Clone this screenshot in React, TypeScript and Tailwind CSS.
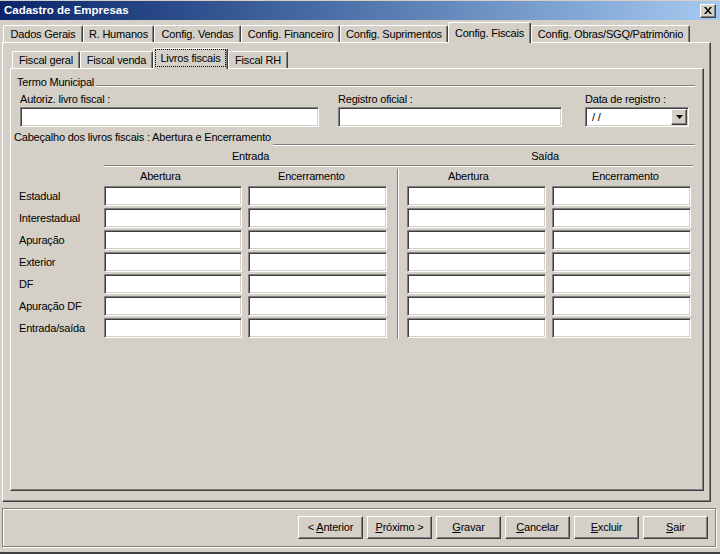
import React from "react";

const RAISED =
  "border border-t-white border-l-white border-r-[#404040] border-b-[#404040] shadow-[inset_-1px_-1px_0_#808080]";
const SUNKEN =
  "bg-white border border-t-[#808080] border-l-[#808080] border-r-white border-b-white shadow-[inset_1px_1px_0_#404040,inset_-1px_-1px_0_#d4d0c8]";
const ETCHED_H = "h-[2px] border-t border-t-[#808080] border-b border-b-white";

const TOP_TABS: [string, number][] = [
  ["Dados Gerais", 80],
  ["R. Humanos", 71],
  ["Config. Vendas", 87],
  ["Config. Financeiro", 99],
  ["Config. Suprimentos", 108],
  ["Config. Fiscais", 83],
  ["Config. Obras/SGQ/Patrimônio", 159],
];

const SUB_TABS: [string, number][] = [
  ["Fiscal geral", 68],
  ["Fiscal venda", 73],
  ["Livros fiscais", 75],
  ["Fiscal RH", 60],
];

const ROWS = [
  "Estadual",
  "Interestadual",
  "Apuração",
  "Exterior",
  "DF",
  "Apuração DF",
  "Entrada/saída",
];

function Tab({ label, width, active, focus }: { label: string; width: number; active?: boolean; focus?: boolean }) {
  const base =
    "flex shrink-0 items-stretch border-t border-l border-r border-t-white border-l-white border-r-[#404040] shadow-[inset_-1px_0_0_#808080] rounded-t-[2px]";
  return (
    <div
      className={
        active
          ? `${base} relative z-10 h-[21px] mb-[-1px] bg-[#d4d0c8]`
          : `${base} h-[17px]`
      }
      style={{ width }}
    >
      {focus ? (
        <div className="flex-1 ml-[1px] mr-[1px] mb-[2px] border border-dotted border-black flex items-center justify-center whitespace-nowrap">
          {label}
        </div>
      ) : (
        <div className="flex-1 flex items-center justify-center whitespace-nowrap">{label}</div>
      )}
    </div>
  );
}

function Field({ className = "" }: { className?: string }) {
  return <div className={`h-[20px] ${SUNKEN} ${className}`} />;
}

function Button({ pre = "", hot, rest }: { pre?: string; hot: string; rest: string }) {
  return (
    <div className={`w-[65px] h-[23px] bg-[#d4d0c8] ${RAISED} flex items-center justify-center`}>
      <span className="whitespace-pre">
        {pre}
        <span className="underline underline-offset-[1px]">{hot}</span>
        {rest}
      </span>
    </div>
  );
}

export default function App() {
  return (
    <div className="w-[720px] h-[554px] bg-[#d4d0c8] flex flex-col pt-[1px] border-b-2 border-b-[#404040] font-['Liberation_Sans',Arial,sans-serif] text-[11px] leading-[13px] tracking-[-0.2px] text-black">
      {/* title bar */}
      <div className="h-[19px] shrink-0 flex items-center justify-between pl-[4px] pr-[4px] bg-gradient-to-r from-[#0a246a] to-[#a6caf0]">
        <span className="text-white font-bold text-[11.5px] tracking-normal">Cadastro de Empresas</span>
        <div className={`w-[16px] h-[14px] bg-[#d4d0c8] ${RAISED} flex items-center justify-center`}>
          <svg width="8" height="7" viewBox="0 0 8 7">
            <path d="M0 0h2l2 2.5L6 0h2L5 3.5 8 7H6L4 4.5 2 7H0l3-3.5z" fill="#000" />
          </svg>
        </div>
      </div>

      {/* top tabs */}
      <div className="h-[22px] shrink-0 flex items-end pl-[3px]">
        {TOP_TABS.map(([label, w]) => (
          <Tab key={label} label={label} width={w} active={label === "Config. Fiscais"} />
        ))}
      </div>

      {/* outer page */}
      <div className={`ml-[2px] w-[709px] h-[460px] shrink-0 flex flex-col ${RAISED}`}>
        <div className="h-[20px] mt-[5px] shrink-0 flex items-end pl-[9px]">
          {SUB_TABS.map(([label, w]) => (
            <Tab
              key={label}
              label={label}
              width={w}
              active={label === "Livros fiscais"}
              focus={label === "Livros fiscais"}
            />
          ))}
        </div>

        {/* inner page */}
        <div className={`ml-[7px] w-[694px] h-[423px] shrink-0 flex flex-col ${RAISED}`}>
          {/* Termo Municipal */}
          <div className="mt-[7px] h-[13px] flex items-end pl-[6px] pr-[8px]">
            <span className="whitespace-nowrap">Termo Municipal</span>
            <div className={`flex-1 ml-[2px] mb-[2px] ${ETCHED_H}`} />
          </div>

          <div className="mt-[4px] flex">
            <div className="ml-[9px] w-[299px] flex flex-col">
              <span className="h-[13px]">Autoriz. livro fiscal :</span>
              <Field className="mt-[1px]" />
            </div>
            <div className="ml-[19px] w-[224px] flex flex-col">
              <span className="h-[13px]">Registro oficial :</span>
              <Field className="mt-[1px]" />
            </div>
            <div className="ml-[23px] w-[104px] flex flex-col">
              <span className="h-[13px]">Data de registro :</span>
              <div className={`mt-[1px] h-[20px] ${SUNKEN} flex items-center`}>
                <span className="flex-1 pl-[6px]">/ /</span>
                <div className={`w-[16px] h-[16px] mr-[1px] bg-[#d4d0c8] ${RAISED} flex items-center justify-center`}>
                  <svg width="7" height="4" viewBox="0 0 7 4">
                    <polygon points="0,0 7,0 3.5,4" fill="#000" />
                  </svg>
                </div>
              </div>
            </div>
          </div>

          {/* Cabeçalho */}
          <div className="mt-[4px] h-[15px] flex pl-[3px] pr-[8px]">
            <span className="self-start whitespace-nowrap">Cabeçalho dos livros fiscais : Abertura e Encerramento</span>
            <div className={`self-end flex-1 ml-[2px] ${ETCHED_H}`} />
          </div>

          <div className="mt-[4px] h-[13px] flex">
            <div className="w-[93px]" />
            <div className="w-[293px] text-center">Entrada</div>
            <div className="w-[296px] text-center">Saída</div>
          </div>
          <div className={`mt-[2px] ml-[93px] w-[589px] ${ETCHED_H}`} />

          <div className="mt-[2px] flex">
            <div className="w-[93px] pl-[8px] pt-[17px] flex flex-col gap-[2px]">
              {ROWS.map((r) => (
                <div key={r} className="h-[20px] flex items-center whitespace-nowrap">
                  {r}
                </div>
              ))}
            </div>

            <div className="w-[293px] pt-[1px] flex flex-col">
              <div className="h-[13px] flex">
                <span className="w-[138px] pl-[36px]">Abertura</span>
                <span className="ml-[6px] w-[139px] pl-[30px]">Encerramento</span>
              </div>
              <div className="mt-[3px] flex flex-col gap-[2px]">
                {ROWS.map((r) => (
                  <div key={r} className="flex">
                    <Field className="w-[138px]" />
                    <Field className="ml-[6px] w-[139px]" />
                  </div>
                ))}
              </div>
            </div>

            <div className="w-[296px] pt-[1px] pb-[1px] pl-[9px] border-l border-l-[#808080] shadow-[inset_1px_0_0_#fff] flex flex-col">
              <div className="h-[13px] flex">
                <span className="w-[139px] pl-[41px]">Abertura</span>
                <span className="ml-[6px] w-[139px] pl-[40px]">Encerramento</span>
              </div>
              <div className="mt-[3px] flex flex-col gap-[2px]">
                {ROWS.map((r) => (
                  <div key={r} className="flex">
                    <Field className="w-[139px]" />
                    <Field className="ml-[6px] w-[139px]" />
                  </div>
                ))}
              </div>
            </div>
          </div>
        </div>
      </div>

      {/* buttons */}
      <div className="mt-[6px] ml-[2px] w-[714px] h-[39px] shrink-0 border border-[#808080] shadow-[inset_1px_1px_0_#fff,1px_1px_0_#fff] flex items-center justify-end gap-[4px] pr-[7px]">
        <Button pre="< " hot="A" rest="nterior" />
        <Button hot="P" rest="róximo >" />
        <Button hot="G" rest="ravar" />
        <Button hot="C" rest="ancelar" />
        <Button hot="E" rest="xcluir" />
        <Button hot="S" rest="air" />
      </div>
    </div>
  );
}
